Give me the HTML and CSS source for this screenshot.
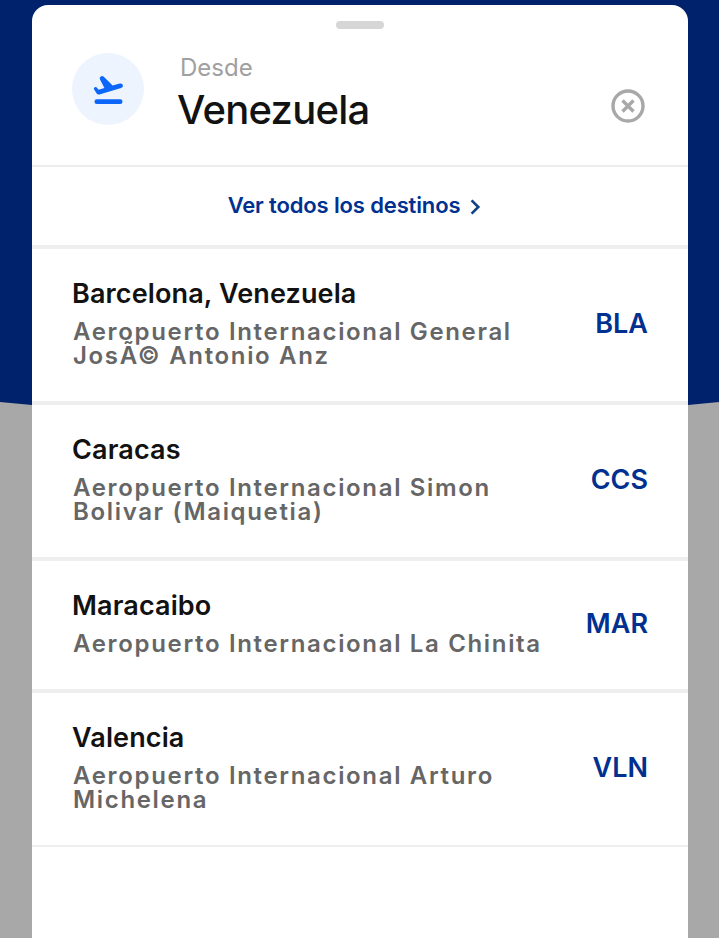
FILE: index.html
```
<!DOCTYPE html>
<html lang="es">
<head>
  <meta charset="UTF-8">
  <title>Elegir origen</title>
  <link rel="stylesheet" href="styles.css">
</head>
<body>
  <main class="sheet">
    <div class="handle"></div>

    <header class="header">
      <div class="icon-circle">
        <svg width="32" height="32" viewBox="0 0 32 32">
          <path d="M2.3 14.4Q4 13.4 5 14.8L6.6 16.7L12.4 15.1L8 6.6Q7 4.2 8.8 3.4Q10.4 2.5 11.8 3.8L20.6 12.5L27.8 10.6Q30.2 10.1 30.9 12.1Q31.3 14.4 29.1 15.1L7.4 21.4Q5.5 21.9 4.5 20.3L2 16.2Q1.6 15 2.3 14.4Z" fill="#0d66fa"/>
          <rect x="2.5" y="26.2" width="28" height="4.8" rx="2.3" fill="#0d66fa"/>
        </svg>
      </div>
      <div class="origin">
        <label class="origin-label" for="origen">Desde</label>
        <div class="origin-value" id="origen">Venezuela</div>
      </div>
      <button class="clear" aria-label="Borrar">
        <svg width="34" height="34" viewBox="0 0 34 34" fill="none" stroke="#a8a8a8">
          <circle cx="17" cy="17" r="15" stroke-width="3.4"/>
          <path d="M11.5 11.5L22.5 22.5M22.5 11.5L11.5 22.5" stroke-width="3.4"/>
        </svg>
      </button>
    </header>

    <a class="all" href="#">
      <span>Ver todos los destinos</span>
      <svg width="11" height="16" viewBox="0 0 11 16" fill="none" stroke="#104287" stroke-width="2.6">
        <path d="M1.6 1.3L8.3 8L1.6 14.7"/>
      </svg>
    </a>

    <ul class="airports">
      <li class="airport">
        <div class="info">
          <div class="city">Barcelona, Venezuela</div>
          <div class="name">Aeropuerto Internacional General<br>JosÃ© Antonio Anz</div>
        </div>
        <div class="code">BLA</div>
      </li>
      <li class="airport">
        <div class="info">
          <div class="city">Caracas</div>
          <div class="name">Aeropuerto Internacional Simon<br>Bolivar (Maiquetia)</div>
        </div>
        <div class="code">CCS</div>
      </li>
      <li class="airport">
        <div class="info">
          <div class="city">Maracaibo</div>
          <div class="name">Aeropuerto Internacional La Chinita</div>
        </div>
        <div class="code">MAR</div>
      </li>
      <li class="airport">
        <div class="info">
          <div class="city">Valencia</div>
          <div class="name">Aeropuerto Internacional Arturo<br>Michelena</div>
        </div>
        <div class="code">VLN</div>
      </li>
    </ul>
  </main>
</body>
</html>
```

FILE: styles.css
```
* {
  box-sizing: border-box;
}
body {
  margin: 0;
  height: 938px;
  padding: 5px 31px 0 32px;
  overflow: hidden;
  background: #a8a8a8;
  font-family: Inter, "Liberation Sans", sans-serif;
  position: relative;
}
/* navy backdrop with the curved bottom edge */
body::before {
  content: "";
  position: absolute;
  inset: 0 0 auto 0;
  height: 420px;
  background: #00216b;
  clip-path: polygon(0 0, 100% 0, 100% 402px, 688px 405px, 360px 420px, 32px 405px, 0 402px);
}
.sheet {
  position: relative;
  height: 933px;
  background: #fff;
  border-radius: 16px 16px 0 0;
}
.handle {
  width: 48px;
  height: 8px;
  margin: 0 auto;
  border-radius: 4px;
  background: #d6d6d6;
  transform: translateY(16px);
}
.header {
  display: flex;
  height: 154px;
  padding: 40px 43px 0 40px;
  border-bottom: 2px solid #ededed;
}
.icon-circle {
  display: flex;
  justify-content: center;
  align-items: center;
  width: 72px;
  height: 72px;
  border-radius: 50%;
  background: #edf4fe;
}
.origin {
  flex: 1;
  margin-left: 33px;
}
.origin-label {
  display: block;
  margin-left: 3px;
  font-size: 24px;
  line-height: 30px;
  color: #a0a0a0;
}
.origin-value {
  font-size: 40px;
  line-height: 54px;
  font-weight: 500;
  letter-spacing: -0.75px;
  color: #121212;
}
.clear {
  align-self: flex-start;
  height: 34px;
  margin-top: 36px;
  padding: 0;
  border: none;
  background: none;
}
.clear svg {
  display: block;
}
.all {
  display: flex;
  justify-content: center;
  align-items: center;
  gap: 10px;
  height: 82px;
  padding: 0 11px 2px 0;
  border-bottom: 4px solid #eeeeee;
  font-size: 22px;
  font-weight: 600;
  letter-spacing: -0.14px;
  color: #003090;
  text-decoration: none;
}
.all svg {
  margin-top: 3px;
}
.airports {
  list-style: none;
  margin: 0;
  padding: 0;
}
.airport {
  display: flex;
  justify-content: space-between;
  align-items: center;
  padding: 27px 40px 33px;
  border-bottom: 4px solid #eeeeee;
}
.airport:last-child {
  border-bottom-width: 2px;
}
.city {
  margin-bottom: 8px;
  font-size: 27px;
  line-height: 36px;
  font-weight: 600;
  letter-spacing: 0.13px;
  color: #121212;
}
.name {
  margin-left: 1px;
  font-size: 24px;
  line-height: 24px;
  font-weight: 600;
  letter-spacing: 1.66px;
  color: #666;
  white-space: nowrap;
}
.code {
  padding-top: 3px;
  font-size: 27px;
  line-height: 32px;
  font-weight: 600;
  color: #003090;
}
```
